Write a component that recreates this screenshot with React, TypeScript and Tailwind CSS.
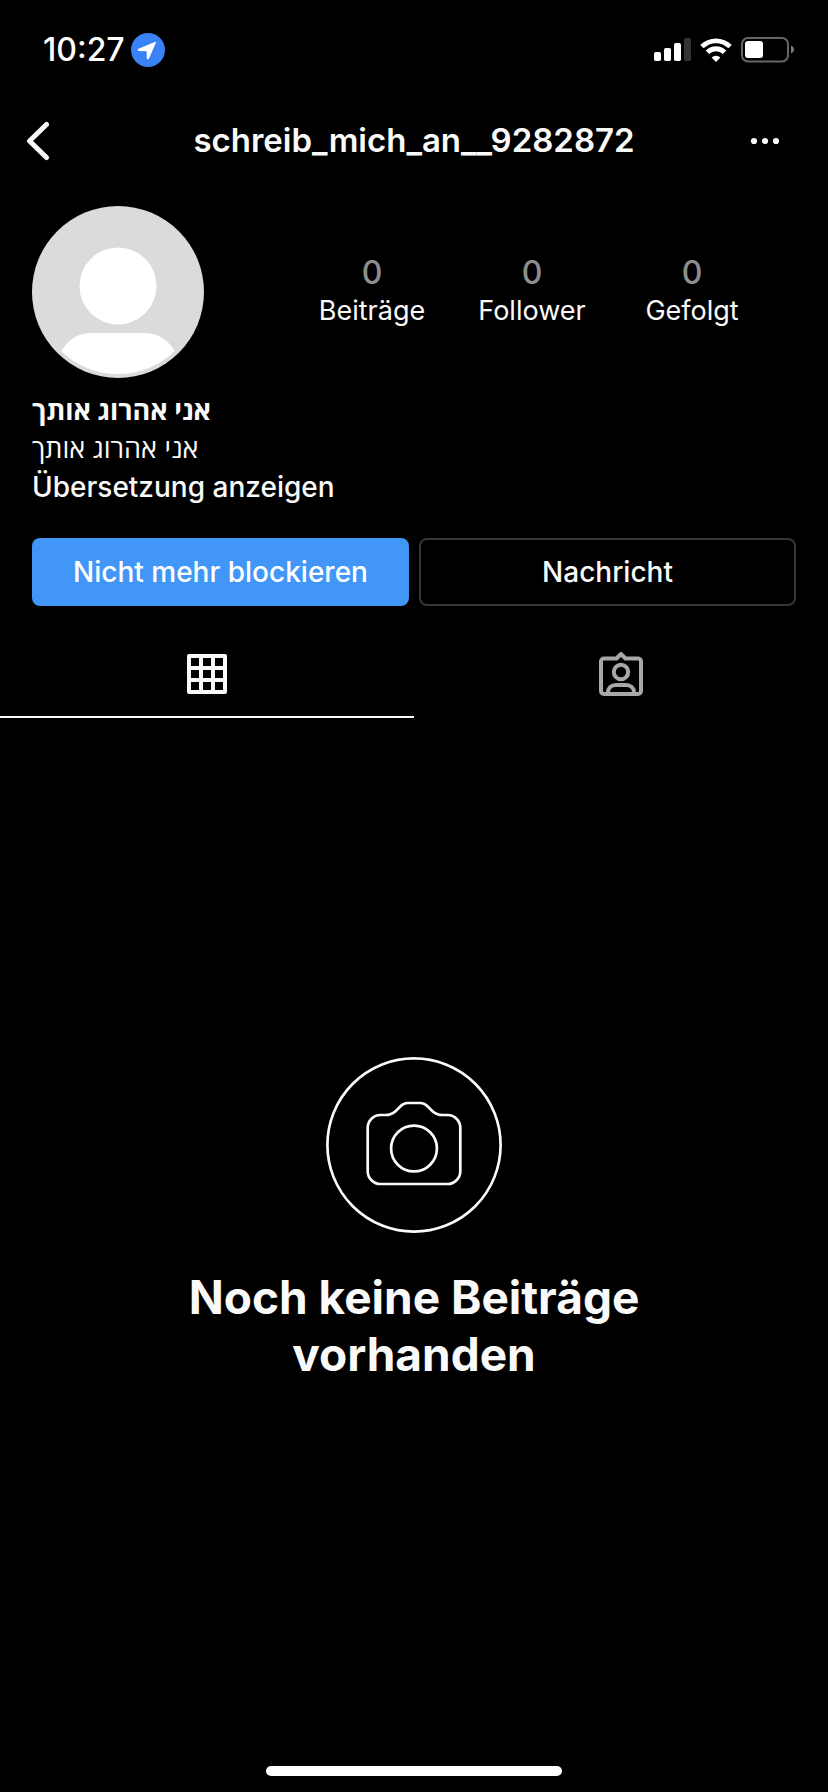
const stats = [
  { label: "Beiträge", value: 0 },
  { label: "Follower", value: 0 },
  { label: "Gefolgt", value: 0 },
];

function LocationSvg() {
  return (
    <svg width="34" height="34" viewBox="0 0 34 34" aria-hidden="true">
      <circle cx="17" cy="17" r="17" fill="#3a82f7" />
      <path
        d="M7.6 15.8 23.6 8.9c.9-.4 1.6.3 1.2 1.2L18 25.6c-.5 1-2.1.8-2.2-.4l-.2-6.900-7.700-.2c-1.300-.1-1.500-1.800-.3-2.300Z"
        fill="#fff"
      />
    </svg>
  );
}

function SignalSvg() {
  return (
    <svg width="37" height="24" viewBox="0 0 37 24" aria-hidden="true">
      <rect x="0" y="14" width="7" height="9" rx="1.8" fill="#fff" />
      <rect x="10" y="10" width="7" height="13" rx="1.8" fill="#fff" />
      <rect x="20" y="5" width="7" height="18" rx="1.8" fill="#fff" />
      <rect x="30" y="0" width="7" height="23" rx="1.8" fill="#333" />
    </svg>
  );
}

function WifiSvg() {
  return (
    <svg width="32" height="24" viewBox="0 0 32 24" aria-hidden="true">
      <g fill="none" stroke="#fff" strokeWidth="4.8">
        <path d="M1.9 8.600a20 20 0 0 1 28.2 0" />
        <path d="M7.4 14.300a12.200 12.200 0 0 1 17.200 0" />
      </g>
      <path d="M11.6 19.400a6.600 6.600 0 0 1 8.800 0L16 24Z" fill="#fff" />
    </svg>
  );
}

function BatterySvg() {
  return (
    <svg width="54" height="26" viewBox="0 0 54 26" aria-hidden="true">
      <rect x="1" y="1" width="46" height="23.5" rx="6" fill="none" stroke="#666" strokeWidth="2" />
      <rect x="4" y="4" width="18" height="17" rx="3" fill="#fff" />
      <path d="M50 8.500c4 1.500 4 6.500 0 8Z" fill="#7a7a7a" />
    </svg>
  );
}

function AvatarSvg() {
  return (
    <svg width="172" height="172" viewBox="0 0 172 172" role="img" aria-label="Profilbild" className="shrink-0">
      <defs>
        <clipPath id="avatar">
          <circle cx="86" cy="86" r="82" />
        </clipPath>
      </defs>
      <circle cx="86" cy="86" r="86" fill="#dbdbdb" />
      <circle cx="86" cy="80" r="38.5" fill="#fff" />
      <path d="M24 158c5-18 17-31 36-31h52c19 0 31 13 36 31v14H24Z" fill="#fff" clipPath="url(#avatar)" />
    </svg>
  );
}

function GridSvg() {
  return (
    <svg width="40" height="40" viewBox="0 0 40 40" aria-hidden="true">
      <rect x="2" y="2" width="36" height="36" fill="none" stroke="#fafafa" strokeWidth="4" strokeLinejoin="round" />
      <path d="M14 2v36M26 2v36M2 14h36M2 26h36" stroke="#fafafa" strokeWidth="4" />
    </svg>
  );
}

function TaggedSvg() {
  return (
    <svg width="44" height="44" viewBox="0 0 44 44" fill="none" stroke="#a8a8a8" strokeWidth="4" aria-hidden="true">
      <path
        d="M5 6.500h12.500L22 2l4.500 4.500H39a3 3 0 0 1 3 3V39a3 3 0 0 1-3 3H5a3 3 0 0 1-3-3V9.500a3 3 0 0 1 3-3Z"
        strokeLinejoin="round"
      />
      <circle cx="22" cy="20" r="7.2" />
      <path d="M9 42v-1.500c0-4.500 3.500-7.500 8-7.500h10c4.500 0 8 3 8 7.500V42" />
    </svg>
  );
}

function CameraSvg() {
  return (
    <svg width="176" height="176" viewBox="0 0 176 176" fill="none" stroke="#fafafa" strokeWidth="2.7" aria-hidden="true">
      <circle cx="88" cy="88" r="86.6" />
      <path d="M54.500 58h5c4.500 0 7-1 10-3.800l5-4.900c2-2.100 3.500-3.300 7-3.300h13c3.500 0 5 1.200 7 3.300l5 4.900c3 2.800 5.500 3.800 10 3.800h5c7 0 12.800 5.800 12.800 12.800V114.200c0 7-5.800 12.800-12.800 12.800h-67c-7 0-12.800-5.800-12.800-12.800V70.800C41.700 63.800 47.500 58 54.500 58Z" />
      <circle cx="88" cy="91.5" r="22.9" />
    </svg>
  );
}

function StatusBar() {
  return (
    <div className="flex h-[100px] items-center justify-between pl-[43px] pr-[33px]">
      <div className="flex items-center gap-[6px]">
        <span className="text-[32px] font-medium text-white">10:27</span>
        <LocationSvg />
      </div>
      <div className="flex items-center gap-[9px]">
        <SignalSvg />
        <WifiSvg />
        <BatterySvg />
      </div>
    </div>
  );
}

function Header() {
  return (
    <header className="flex h-[82px] items-center justify-between pl-[26px] pr-12">
      <button aria-label="Zurück" className="flex w-[52px]">
        <svg width="24" height="40" viewBox="0 0 24 40" fill="none" stroke="#fafafa" strokeWidth="5" strokeLinecap="round" strokeLinejoin="round">
          <path d="M20.500 3.500 3.500 20l17 16.500" />
        </svg>
      </button>
      <h1 className="text-[33px] font-semibold">schreib_mich_an__9282872</h1>
      <button aria-label="Optionen" className="flex w-[30px] justify-end">
        <svg width="30" height="8" viewBox="0 0 30 8" fill="#fafafa">
          <circle cx="4" cy="4" r="3.1" />
          <circle cx="15" cy="4" r="3.1" />
          <circle cx="26" cy="4" r="3.1" />
        </svg>
      </button>
    </header>
  );
}

export default function App() {
  return (
    <div className="flex min-h-screen flex-col bg-black font-['Inter','Open_Sans',sans-serif] text-[#fafafa]">
      <StatusBar />
      <Header />

      <main className="flex flex-1 flex-col">
        <section className="px-8 pt-6">
          <div className="flex items-center justify-between pr-6">
            <AvatarSvg />
            <ul className="flex">
              {stats.map((s) => (
                <li key={s.label} className="flex w-40 flex-col items-center">
                  <span className="text-[32px] leading-[38px] font-medium text-[#8e8e8e]">{s.value}</span>
                  <span className="text-[27px] leading-[38px]">{s.label}</span>
                </li>
              ))}
            </ul>
          </div>

          <div className="mt-[14px] flex flex-col items-start text-[27px] leading-[38px]">
            <h2 dir="rtl" className="font-bold">אני אהרוג אותך</h2>
            <p dir="rtl">אני אהרוג אותך</p>
            <button className="text-[28px] leading-[38px] font-medium">Übersetzung anzeigen</button>
          </div>

          <div className="mt-8 grid grid-cols-2 gap-[10px] text-[28px] font-medium">
            <button className="h-[68px] rounded-lg bg-[#4296f7] text-white">Nicht mehr blockieren</button>
            <button className="h-[68px] rounded-lg border-2 border-[#363636]">Nachricht</button>
          </div>
        </section>

        <nav className="mt-6 grid grid-cols-2">
          <button aria-label="Beiträge" className="flex h-[88px] items-center justify-center border-y-2 border-t-transparent border-b-[#fafafa]">
            <GridSvg />
          </button>
          <button aria-label="Markiert" className="flex h-[88px] items-center justify-center">
            <TaggedSvg />
          </button>
        </nav>

        <section className="flex flex-1 flex-col items-center justify-center px-40">
          <CameraSvg />
          <h2 className="mt-9 text-center text-[46px] leading-[57px] font-bold">
            Noch keine Beiträge vorhanden
          </h2>
        </section>
      </main>

      <footer className="flex h-[70px] items-end justify-center pb-4">
        <div className="h-[10px] w-[296px] rounded-full bg-white" />
      </footer>
    </div>
  );
}
